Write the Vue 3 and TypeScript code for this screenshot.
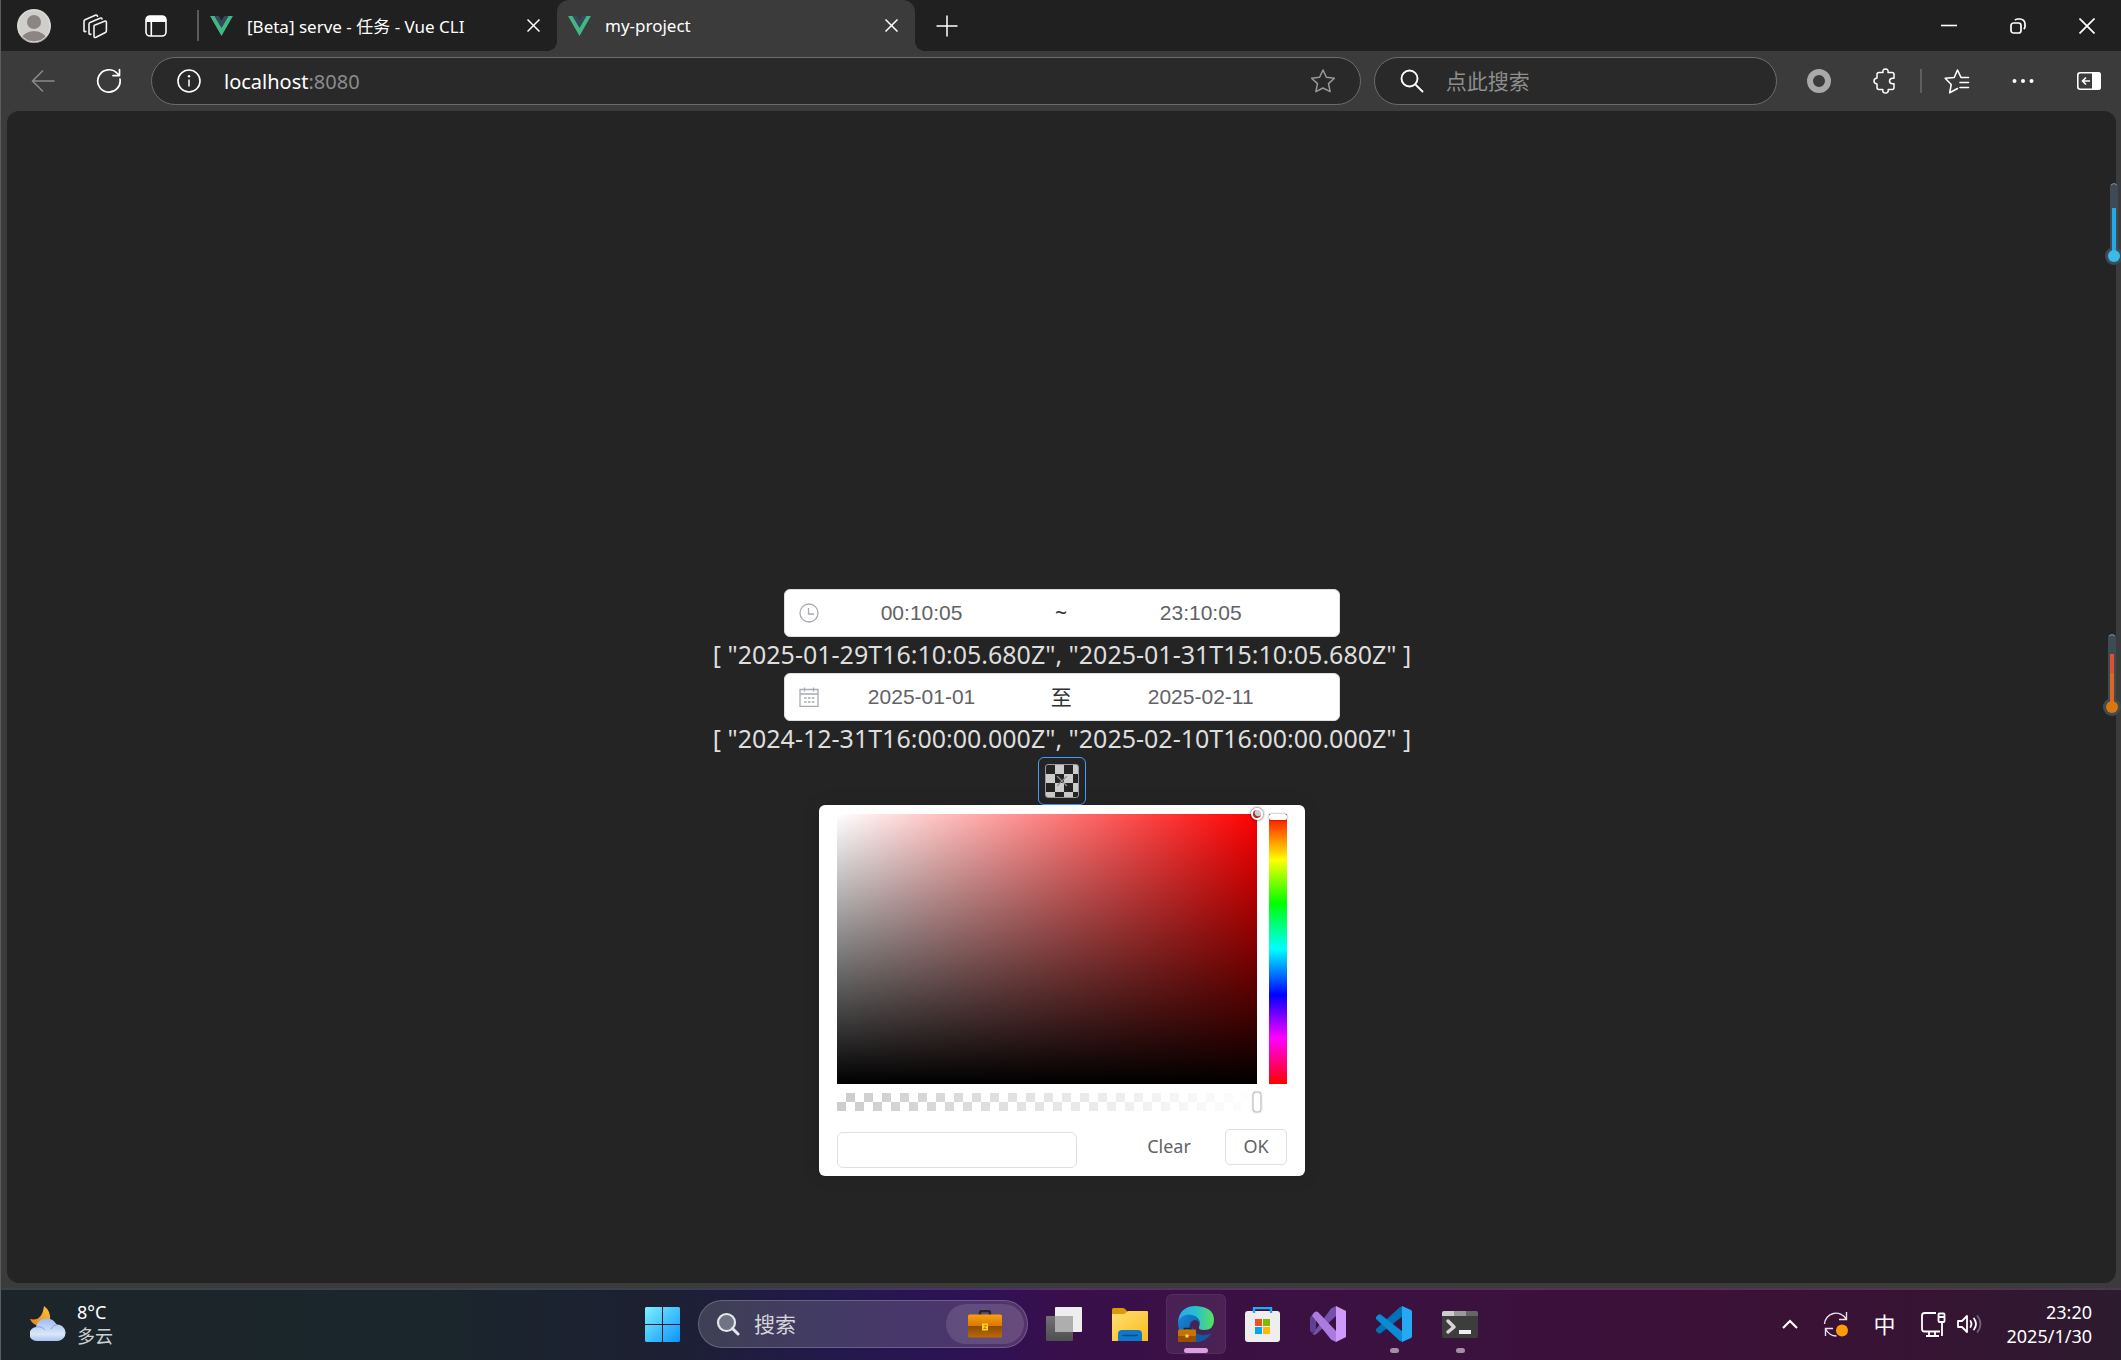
<script setup lang="ts">
import { ref, computed } from 'vue'

const timeStart = ref('00:10:05')
const timeEnd = ref('23:10:05')
const dateStart = ref('2025-01-01')
const dateEnd = ref('2025-02-11')
const timeRange = ref<string[]>(['2025-01-29T16:10:05.680Z', '2025-01-31T15:10:05.680Z'])
const dateRange = ref<string[]>(['2024-12-31T16:00:00.000Z', '2025-02-10T16:00:00.000Z'])

const show = (range: string[]): string => '[ ' + range.map((v) => `"${v}"`).join(', ') + ' ]'
const timeText = computed(() => show(timeRange.value))
const dateText = computed(() => show(dateRange.value))

const hue = ref(0)
const alpha = ref(100)
const colorText = ref('')
const webQuery = ref('')
</script>

<template>
  <div class="desktop">
    <header class="titlebar">
      <div class="title-tools">
        <button class="tool" aria-label="Profile">
          <svg width="34" height="34" viewBox="0 0 34 34">
            <defs><clipPath id="av"><circle cx="17" cy="17" r="17" /></clipPath></defs>
            <g clip-path="url(#av)">
              <rect width="34" height="34" fill="#d0cecb" />
              <circle cx="17" cy="13" r="7" fill="#8b8683" />
              <ellipse cx="17" cy="32" rx="13" ry="10" fill="#8b8683" />
            </g>
            <circle cx="17" cy="17" r="16" fill="none" stroke="#dedcd9" />
          </svg>
        </button>
        <button class="tool" aria-label="Workspaces">
          <svg width="26" height="26" viewBox="0 0 26 26" fill="none" stroke="#f2f2f2" stroke-width="1.6" stroke-linejoin="round" stroke-linecap="round">
            <path d="M12.5 12.2 22.5 8.2Q24.4 7.6 24.4 9.5V17.8Q24.4 19 23.4 19.5L14 24.3Q12 25 12 23V13.4Q12 12.5 12.5 12.2Z" />
            <path d="M20 6Q19.600 4.600 18 5.200L8 9.600Q7 10 7 11.200V20.500Q7.200 21.800 8.800 21.200" />
            <path d="M15.500 3.200Q15 1.600 13.300 2.200L3 6.700Q2 7.200 2 8.400V17.800Q2.200 19 3.800 18.400" />
          </svg>
        </button>
        <button class="tool" aria-label="Tab actions">
          <svg width="22" height="22" viewBox="0 0 22 22">
            <rect x="1" y="1" width="20" height="20" rx="4" fill="none" stroke="#fff" stroke-width="1.600" />
            <path d="M1 7V5a4 4 0 0 1 4-4h12a4 4 0 0 1 4 4v2zM5.500 7h1.600v14H5.500z" fill="#fff" />
          </svg>
        </button>
      </div>
      <nav class="tabs">
        <div class="tab">
          <svg class="vue" viewBox="0 0 24 21"><path d="M0 0h4.800L12 12.400 19.200 0H24L12 21z" fill="#41b883" /><path d="M4.800 0h4.400L12 4.900 14.800 0h4.400L12 12.400z" fill="#34495e" /></svg>
          <span class="tab-title">[Beta] serve - 任务 - Vue CLI</span>
          <button class="tab-close" aria-label="Close tab"><svg width="13" height="13" viewBox="0 0 13 13"><path d="M.5.5l12 12M12.500.5l-12 12" stroke="#fff" stroke-width="1.500" /></svg></button>
        </div>
        <div class="tab active">
          <svg class="vue" viewBox="0 0 24 21"><path d="M0 0h4.800L12 12.400 19.200 0H24L12 21z" fill="#41b883" /><path d="M4.800 0h4.400L12 4.900 14.800 0h4.400L12 12.400z" fill="#34495e" /></svg>
          <span class="tab-title">my-project</span>
          <button class="tab-close" aria-label="Close tab"><svg width="13" height="13" viewBox="0 0 13 13"><path d="M.5.5l12 12M12.500.5l-12 12" stroke="#fff" stroke-width="1.500" /></svg></button>
        </div>
        <button class="new-tab" aria-label="New tab"><svg width="22" height="22" viewBox="0 0 22 22"><path d="M11 .5v21M.5 11h21" stroke="#fff" stroke-width="1.500" /></svg></button>
      </nav>
      <div class="window-controls">
        <button aria-label="Minimize"><svg width="16" height="16" viewBox="0 0 16 16"><path d="M0 7.500h16" stroke="#fff" stroke-width="1.600" /></svg></button>
        <button aria-label="Restore"><svg width="16" height="16" viewBox="0 0 16 16" fill="none" stroke="#fff" stroke-width="1.700"><rect x="1" y="5" width="10" height="10" rx="2.500" /><path d="M5 2.300Q5.800 1 7.500 1H10a5 5 0 0 1 5 5v2.500q0 1.700-1.300 2.500" /></svg></button>
        <button aria-label="Close"><svg width="16" height="16" viewBox="0 0 16 16"><path d="M.5.5l15 15M15.500.5l-15 15" stroke="#fff" stroke-width="1.700" /></svg></button>
      </div>
    </header>

    <div class="toolbar">
      <button class="nav-btn" aria-label="Back"><svg width="24" height="22" viewBox="0 0 24 22" fill="none" stroke="#8a8a8a" stroke-width="1.600" stroke-linecap="round" stroke-linejoin="round"><path d="M23 11H1.500M11.500 1 1.500 11l10 10" /></svg></button>
      <button class="nav-btn" aria-label="Refresh"><svg width="26" height="26" viewBox="0 0 26 26" fill="none" stroke="#fff" stroke-width="1.700" stroke-linecap="round" stroke-linejoin="round"><path d="M24 11.200A11.200 11.200 0 1 1 21.300 5.500L23.500 7.600M23.500 1.500V7.600H17" /></svg></button>
      <div class="fields">
        <div class="pill">
          <svg width="24" height="24" viewBox="0 0 24 24"><circle cx="12" cy="12" r="11" fill="none" stroke="#fff" stroke-width="1.600" /><path d="M12 10.500v7" stroke="#fff" stroke-width="1.500" /><circle cx="12" cy="7.300" r="1.200" fill="#fff" /></svg>
          <a class="url" href="#">localhost<span>:8080</span></a>
          <button aria-label="Favorite"><svg width="24" height="26" viewBox="1 0 24 26"><path d="M13 2l3.400 7.300 8 .9-5.900 5.400 1.600 8L13 20l-7.100 3.600 1.600-8L1.600 10.200l8-.9z" fill="none" stroke="#999" stroke-width="1.500" stroke-linejoin="round" /></svg></button>
        </div>
        <div class="pill web-search">
          <svg width="24" height="24" viewBox="0 0 24 24" fill="none" stroke="#fff" stroke-width="1.900"><circle cx="9.500" cy="9.500" r="8" /><path d="M15.300 15.300 22.500 22.500" stroke-linecap="round" /></svg>
          <input v-model="webQuery" type="text" placeholder="点此搜索" aria-label="点此搜索" />
        </div>
      </div>
      <div class="actions">
        <button class="w24" aria-label="Extension"><svg width="24" height="24" viewBox="0 0 24 24"><circle cx="12" cy="12" r="9" fill="none" stroke="#a9a9a9" stroke-width="6" /></svg></button>
        <button class="w24" aria-label="Extensions"><svg width="24" height="26" viewBox="0 0 24 26" fill="none" stroke="#fff" stroke-width="1.500" stroke-linejoin="round"><path d="M6 4.500H10C9.400 2.200 10.600 1 12.500 1S15.600 2.200 15 4.500H19Q21 4.500 21 6.500V10.200H19.500Q16.500 10.500 16.500 13T19.500 15.800H21V19.500Q21 21.500 19 21.500H15.200C15.600 24 14.400 25 12.500 25S9.400 24 9.800 21.500H6Q4 21.500 4 19.500V16Q1 15.600 1 13T4 10V6.500Q4 4.500 6 4.500Z" /></svg></button>
        <i class="sep"></i>
        <button class="w24" aria-label="Favorites"><svg width="26" height="26" viewBox="0 0 26 26" fill="none" stroke="#fff" stroke-width="1.600" stroke-linejoin="round" stroke-linecap="round"><path d="M24.500 9.500H17L13.500 2l-3.300 7.500-9 .8 6 6.200-1.500 8.300L13.500 20.500M16 14.500h8.500M16 19.500h8.500" /></svg></button>
        <button class="w24" aria-label="More"><svg width="22" height="6" viewBox="0 0 22 6" fill="#fff"><circle cx="2.500" cy="3" r="2" /><circle cx="11" cy="3" r="2" /><circle cx="19.500" cy="3" r="2" /></svg></button>
        <button class="w24" aria-label="Sidebar"><svg width="24" height="18" viewBox="0 0 24 18"><rect x=".8" y=".8" width="22.400" height="16.400" rx="2.500" fill="none" stroke="#fff" stroke-width="1.600" /><path d="M15 0h6a3 3 0 0 1 3 3v12a3 3 0 0 1-3 3h-6z" fill="#fff" /><path d="M13 9H5.500M9 5.500 5.500 9 9 12.500" fill="none" stroke="#fff" stroke-width="1.600" /></svg></button>
      </div>
    </div>

    <main class="viewport">
      <div class="page">
        <div class="range">
          <svg class="range-icon" viewBox="0 0 20 20" fill="none" stroke="#a8abb2" stroke-width="1.300"><circle cx="10" cy="10" r="9" /><path d="M9.500 5v6H15" /></svg>
          <input v-model="timeStart" type="text" aria-label="Start time" />
          <span class="range-sep">~</span>
          <input v-model="timeEnd" type="text" aria-label="End time" />
        </div>
        <div class="value">{{ timeText }}</div>
        <div class="range">
          <svg class="range-icon" viewBox="0 0 20 20" fill="none" stroke="#a8abb2" stroke-width="1.300"><path d="M1 2.500h18v16.800H1zM1 7h18M5.500 .5v4M14.500 .5v4" /><path d="M5 11h2.600M8.900 11h2.600M12.800 11h2.600M5 15h2.600M8.900 15h2.600M12.800 15h2.600" /></svg>
          <input v-model="dateStart" type="text" aria-label="Start date" />
          <span class="range-sep">至</span>
          <input v-model="dateEnd" type="text" aria-label="End date" />
        </div>
        <div class="value">{{ dateText }}</div>
        <div class="picker">
          <button class="trigger" aria-label="Pick a color">
            <span class="swatch checker"><svg width="12" height="12" viewBox="0 0 12 12"><path d="M1 1l10 10M11 1 1 11" stroke="#909399" stroke-width="1.200" /></svg></span>
          </button>
          <div class="panel">
            <div class="panel-main">
              <div class="sv"><i class="cursor"></i></div>
              <input v-model="hue" class="hue" type="range" min="0" max="360" aria-label="Hue" />
            </div>
            <div class="alpha checker">
              <input v-model="alpha" type="range" min="0" max="100" aria-label="Alpha" />
            </div>
            <div class="panel-foot">
              <input v-model="colorText" class="hex" type="text" aria-label="Color value" />
              <div class="panel-btns">
                <button class="clear">Clear</button>
                <button class="ok">OK</button>
              </div>
            </div>
          </div>
        </div>
      </div>
      <svg class="gauge first" width="18" height="84" viewBox="0 0 18 84">
        <rect x="5" y="1" width="8" height="72" rx="4" fill="#3e4b55" /><circle cx="9" cy="74" r="9" fill="#3e4b55" />
        <path d="M6 3q3-3 6 0" fill="none" stroke="#7e878d" /><path d="M9 26v44" stroke="#23a9e8" stroke-width="4" /><circle cx="9" cy="74" r="6" fill="#3bb9e9" />
      </svg>
      <svg class="gauge second" width="18" height="84" viewBox="0 0 18 84">
        <rect x="5" y="1" width="8" height="72" rx="4" fill="#3e4b55" /><circle cx="9" cy="74" r="9" fill="#3e4b55" />
        <path d="M6 3q3-3 6 0" fill="none" stroke="#7e878d" /><path d="M7 21h4v20H7z" fill="#dc5030" /><path d="M7 40h4v30H7z" fill="#dc6820" /><circle cx="9" cy="74" r="6" fill="#da750f" />
      </svg>
    </main>

    <footer class="taskbar">
      <button class="weather">
        <svg width="36" height="36" viewBox="0 0 36 36">
          <defs>
            <linearGradient id="cl" x2="0" y2="1"><stop stop-color="#9dbcf0" /><stop offset=".7" stop-color="#dbe6fa" /><stop offset="1" stop-color="#a9c3f2" /></linearGradient>
            <linearGradient id="mo" x1="1" x2="0" y2="1"><stop stop-color="#f8c63c" /><stop offset="1" stop-color="#ee7d18" /></linearGradient>
          </defs>
          <path d="M14 0q7 5 6 14l-9 6Q3 20 0 13q12 3 14-13z" fill="url(#mo)" />
          <path d="M7 35a7 7 0 0 1-1-14 11 11 0 0 1 20.500-2.500A8 8 0 1 1 28 35z" fill="url(#cl)" />
          <path d="M6 21q6-1 9 3M21 23q2-4 6-4.500" fill="none" stroke="#7fa3e6" stroke-width="1" />
        </svg>
        <span class="weather-text"><span>8°C</span><span class="dim">多云</span></span>
      </button>

      <div class="apps">
        <button class="app" aria-label="Start">
          <svg width="35" height="35" viewBox="0 0 35 35"><defs><linearGradient id="win" x2="1" y2="1"><stop stop-color="#7df0ff" /><stop offset="1" stop-color="#0a94fb" /></linearGradient></defs><path d="M1 0h16v17H0V1zM18 0h16l1 1v16H18zM0 18h17v17H1l-1-1zM18 18h17v16l-1 1H18z" fill="url(#win)" /></svg>
        </button>
        <div class="task-search">
          <svg width="24" height="24" viewBox="0 0 24 24" fill="none" stroke="#e4e6ea" stroke-width="2.200"><circle cx="10.500" cy="10.500" r="8.500" fill="#6f7384" /><path d="M16.500 16.500 22 22" stroke-width="3" stroke-linecap="round" /></svg>
          <input type="text" placeholder="搜索" aria-label="搜索" />
          <span class="daily">
            <svg width="34" height="28" viewBox="0 0 34 28"><defs><linearGradient id="bc" x2="0" y2="1"><stop stop-color="#f9a010" /><stop offset=".5" stop-color="#d97800" /><stop offset=".52" stop-color="#8f4a04" /><stop offset="1" stop-color="#bd6a04" /></linearGradient></defs><path d="M12 5V3q0-2 2-2h6q2 0 2 2v2" fill="none" stroke="#29252c" stroke-width="2.400" /><rect y="4.500" width="34" height="23" rx="1.500" fill="url(#bc)" /><rect x="14" y="13.500" width="6" height="7" fill="#fdd61d" /><path d="M15.500 15.500h3l-3 3h3" fill="none" stroke="#c98704" /></svg>
          </span>
        </div>
        <button class="app" aria-label="Task view">
          <svg width="36" height="34" viewBox="0 0 36 34"><defs><linearGradient id="tv" x2="0" y2="1"><stop stop-color="#727272" /><stop offset="1" stop-color="#4e4e4e" /></linearGradient></defs><rect y="9" width="27" height="25" rx="1" fill="url(#tv)" /><rect x="9" width="27" height="25" rx="1" fill="#eee" /><rect x="9" y="9" width="18" height="16" fill="#aeaeae" /></svg>
        </button>
        <button class="app" aria-label="File Explorer">
          <svg width="36" height="33" viewBox="0 0 36 33"><defs><linearGradient id="fo" x2="1" y2="1"><stop stop-color="#ffdf70" /><stop offset="1" stop-color="#fabb20" /></linearGradient></defs><path d="M0 1.500Q0 0 1.500 0H11q1 0 2 1l2.500 2.500L12 9H0z" fill="#db9a05" /><path d="M0 6h11q2 0 3-1.500L16 3h19q1 0 1 1v29H0z" fill="url(#fo)" /><path d="M6 33v-7q0-4 4-4h16q4 0 4 4v7z" fill="#1177c9" /><path d="M11 27.500h14" stroke="#0a4b8c" stroke-width="1.600" stroke-linecap="round" /></svg>
        </button>
        <button class="app current" aria-label="Edge">
          <svg width="36" height="36" viewBox="0 0 36 36">
            <defs>
              <linearGradient id="e1" x2="1"><stop stop-color="#2aa7ee" /><stop offset=".5" stop-color="#28c0cf" /><stop offset="1" stop-color="#5ce05a" /></linearGradient>
              <linearGradient id="e2" x2="1" y2="1"><stop stop-color="#168bd8" /><stop offset="1" stop-color="#0c4f96" /></linearGradient>
            </defs>
            <path d="M0 17Q1 0 18 0 36 1 36 14 36 24 26 24 20 24 21 21 23 17 19 13 12 7 0 17z" fill="url(#e1)" />
            <path d="M0 15Q6 7 14 9 22 11 22 18 18 11 13 16 9 24 16 31 19 35 23 35 17 37 11 35 0 30 0 15z" fill="url(#e2)" />
            <path d="M14 20Q16 29 25 29 30 29 33.500 27 28 36 18 36 11 30 14 20z" fill="#0d59a3" />
            <path d="M6.500 24v-1.500h6V24" fill="none" stroke="#222" stroke-width="1.500" /><rect y="23.500" width="18" height="12.500" rx="1" fill="#c77205" /><rect y="30" width="18" height="6" fill="#985006" /><rect x="7.500" y="28.500" width="3" height="3" fill="#ffd93a" />
          </svg>
          <i class="mark wide"></i>
        </button>
        <button class="app" aria-label="Microsoft Store">
          <svg width="35" height="35" viewBox="0 0 35 35"><rect y="4" width="35" height="31" rx="3" fill="#eee" /><path d="M9 6V1h17v5" fill="none" stroke="#23aaf2" stroke-width="2.400" /><path d="M10 12h7v7h-7z" fill="#f25022" /><path d="M18 12h7v7h-7z" fill="#7fba00" /><path d="M10 20h7v7h-7z" fill="#00a4ef" /><path d="M18 20h7v7h-7z" fill="#ffb900" /></svg>
        </button>
        <button class="app" aria-label="Visual Studio">
          <svg width="36" height="36" viewBox="0 0 36 36"><path d="M0 11.500 2 9l4 3v12l-4 3-2-2.500z" fill="#5e4290" /><path d="M3 27.500 21 2.500 26 0v10L7 27.500q-3 3-5-.5z" fill="#7350ac" /><path d="M2 9.500Q5 4 8 6L26 25v11L21 33.500 3 11z" fill="#aa7ce0" /><path d="M26 0l10 5v26l-10 5z" fill="#cf9bfb" /></svg>
        </button>
        <button class="app" aria-label="Visual Studio Code">
          <svg width="36" height="36" viewBox="0 0 36 36"><path d="M0 23 24 1l3-1v10L5 27q-1.500 1-3 0l-2-2q-1-1 0-2z" fill="#0070b8" /><path d="M0 11 2 9q1.500-1.300 3-.200L27 26v10l-3-1L0 13q-1-1 0-2z" fill="#0a8bd5" /><path d="M26 0l9 4q1 .5 1 2v24q0 1.500-1 2l-9 4z" fill="#25a9f3" /></svg>
          <i class="mark"></i>
        </button>
        <button class="app" aria-label="Terminal">
          <svg width="36" height="27" viewBox="0 0 36 27"><rect width="36" height="27" rx="2" fill="#3d3d3d" /><path d="M0 5V2q0-2 2-2h10v5z" fill="#ccc" /><path d="M12 0h12v5H12z" fill="#999" /><path d="M24 0h10q2 0 2 2v3H24z" fill="#666" /><path d="M6 10l6 6-6 5" fill="none" stroke="#d6d6d6" stroke-width="3.500" stroke-linecap="round" stroke-linejoin="round" /><rect x="17" y="19" width="12" height="4" fill="#eee" /></svg>
          <i class="mark"></i>
        </button>
      </div>

      <div class="tray">
        <button aria-label="Hidden icons"><svg width="16" height="10" viewBox="0 0 16 10"><path d="M1 9l7-7 7 7" fill="none" stroke="#fff" stroke-width="2.200" /></svg></button>
        <button aria-label="Update"><svg width="26" height="26" viewBox="0 0 26 26" fill="none" stroke="#e8e2e8" stroke-width="1.400"><path d="M1.500 13A11.500 11.500 0 0 1 23 8M23.500 1v7.500H16M2.500 25v-7.500H10M2.500 18q4 7 11 7" /><circle cx="19" cy="19.500" r="6" fill="#ff9a0b" stroke="none" /></svg></button>
        <button class="ime">中</button>
        <button class="net" aria-label="Network and volume">
          <svg width="25" height="25" viewBox="0 0 25 25" fill="none" stroke="#fff" stroke-width="1.800"><path d="M15 1H3.500Q1 1 1 3.500V17q0 2.500 2.500 2.500H19M8 20v4M14 20v4M5 24h13M17.500 2.500q0-1 1-1h4q1 0 1 1V9q0 1-1 1h-4q-1 0-1-1zM17.500 5h6M21 10v14" /></svg>
          <svg width="25" height="20" viewBox="0 0 25 20" fill="none" stroke="#fff" stroke-width="1.800" stroke-linejoin="round" stroke-linecap="round"><path d="M1 7v6h4l5 5V2L5 7zM13.500 7q2 3 0 6M17 4.500q4 5.500 0 11" /><path d="M20.500 2q6 8 0 16" stroke="#75637a" /></svg>
        </button>
        <button class="clock"><span>23:20</span><span>2025/1/30</span></button>
      </div>
    </footer>
  </div>
</template>

<style>
body {
  background: #3b3b3b;
}
</style>

<style scoped>
.desktop,
.desktop * {
  box-sizing: border-box;
}
.desktop {
  min-height: 100vh;
  display: flex;
  flex-direction: column;
  background: #3b3b3b;
  border-left: 1px solid #5c5c5c;
  font-family: "Noto Sans", "Noto Sans CJK SC", sans-serif;
  font-size: 17px;
  color: #fff;
}
button {
  display: flex;
  align-items: center;
  justify-content: center;
  padding: 0;
  border: 0;
  background: none;
  color: inherit;
  font: inherit;
}
input {
  min-width: 0;
  padding: 0;
  margin: 0;
  border: 0;
  outline: 0;
  background: none;
  font: inherit;
}
svg {
  display: block;
  flex: none;
}

/* title bar */
.titlebar {
  display: flex;
  height: 51px;
  background: #202020;
}
.title-tools {
  display: flex;
  align-items: center;
  gap: 3px;
  width: 198px;
  padding-left: 4px;
  border-right: 2px solid #5a5a5a;
  border-image: linear-gradient(transparent 20%, #5a5a5a 20% 80%, transparent 80%) 1;
}
.tool {
  width: 58px;
}
.tabs {
  flex: 1;
  display: flex;
}
.tab {
  position: relative;
  display: flex;
  align-items: center;
  width: 358px;
  padding: 0 11px;
}
.tab.active {
  background: #3b3b3b;
  border-radius: 12px 12px 0 0;
}
.tab.active::before,
.tab.active::after {
  content: "";
  position: absolute;
  bottom: 0;
  width: 10px;
  height: 10px;
}
.tab.active::before {
  left: -10px;
  background: radial-gradient(circle at 0 0, #202020 10px, #3b3b3b 10px);
}
.tab.active::after {
  right: -10px;
  background: radial-gradient(circle at 100% 0, #202020 10px, #3b3b3b 10px);
}
.vue {
  width: 23px;
  height: 20px;
}
.tab-title {
  flex: 1;
  padding-left: 14px;
  white-space: nowrap;
}
.tab-close {
  width: 25px;
  height: 25px;
}
.new-tab {
  width: 64px;
}
.window-controls {
  display: flex;
}
.window-controls button {
  width: 69px;
}

/* toolbar */
.toolbar {
  display: flex;
  align-items: center;
  height: 60px;
  padding: 0 20px 0 18px;
}
.nav-btn {
  width: 48px;
  margin-right: 18px;
}
.fields {
  flex: 1;
  display: grid;
  grid-template-columns: 3fr 1fr;
  gap: 13px;
}
.pill {
  display: flex;
  align-items: center;
  min-width: 0;
  height: 48px;
  padding: 0 25px;
  border: 1px solid #6b6b6b;
  border-radius: 24px;
  background: #292929;
}
.url {
  flex: 1;
  padding-left: 23px;
  font-size: 20px;
  color: #fff;
  text-decoration: none;
}
.url span {
  color: #8c8c8c;
}
.web-search input {
  flex: 1;
  padding-left: 22px;
  font-size: 21px;
  color: #fff;
}
.web-search input::placeholder {
  color: #8e8e8e;
}
.actions {
  display: flex;
  align-items: center;
  gap: 42px;
  padding-left: 30px;
}
.w24 {
  width: 24px;
}
.sep {
  width: 2px;
  height: 24px;
  margin: 0 -19px;
  background: #5e5e5e;
}

/* page */
.viewport {
  position: relative;
  flex: 1;
  display: flex;
  align-items: center;
  justify-content: center;
  margin: 0 5px 5px 6px;
  padding-left: 1px;
  border-radius: 12px;
  background: #242424;
}
.page {
  display: flex;
  flex-direction: column;
  align-items: center;
  width: 700px;
}
.range {
  display: flex;
  align-items: center;
  width: 556px;
  height: 48px;
  padding: 0 14px;
  border: 1px solid #dcdfe6;
  border-radius: 6px;
  background: #fff;
}
.range-icon {
  width: 20px;
  height: 20px;
}
.range input {
  width: 39%;
  text-align: center;
  font-family: "Liberation Sans", sans-serif;
  font-size: 21px;
  color: #606266;
}
.range-sep {
  width: 74px;
  padding-bottom: 2px;
  text-align: center;
  font-size: 21px;
  color: #303133;
}
.value {
  padding-bottom: 2px;
  line-height: 34px;
  font-size: 25px;
  white-space: nowrap;
  color: #dedede;
}
.picker {
  position: relative;
}
.trigger {
  width: 48px;
  height: 48px;
  border: 1px solid #409eff;
  border-radius: 6px;
}
.checker {
  background: conic-gradient(#ccc 25%, transparent 0 50%, #ccc 0 75%, transparent 0) 0 0 / 18px 18px;
}
.swatch {
  display: flex;
  align-items: center;
  justify-content: center;
  width: 34px;
  height: 34px;
  border: 1px solid #999;
  border-radius: 3px;
}
.panel {
  position: absolute;
  top: 100%;
  left: 50%;
  transform: translateX(-50%);
  width: 486px;
  padding: 9px 18px 8px;
  border-radius: 6px;
  background: #fff;
  box-shadow: 0 0 18px rgba(0, 0, 0, 0.12);
}
.panel-main {
  display: flex;
  justify-content: space-between;
}
.sv {
  position: relative;
  width: 420px;
  height: 270px;
  background: linear-gradient(to top, #000, transparent), linear-gradient(to right, #fff, #f00);
}
.cursor {
  position: absolute;
  top: -6px;
  right: -6px;
  width: 12px;
  height: 12px;
  border: 2px solid #fff;
  border-radius: 50%;
  background: radial-gradient(circle at 65% 35%, #ccc 3px, #b22 4px);
  box-shadow: 0 0 2px 1px rgba(0, 0, 0, 0.4);
}
.hue {
  appearance: none;
  writing-mode: vertical-lr;
  width: 18px;
  height: 270px;
  background: linear-gradient(#f00, #ff0 17%, #0f0 33%, #0ff 50%, #00f 67%, #f0f 83%, #f00);
}
.hue::-webkit-slider-thumb {
  appearance: none;
  width: 18px;
  height: 6px;
  border-radius: 2px;
  background: #fff;
  box-shadow: 0 0 2px rgba(0, 0, 0, 0.6);
}
.alpha {
  width: 420px;
  height: 18px;
  margin-top: 9px;
}
.alpha input {
  display: block;
  appearance: none;
  width: 428px;
  height: 18px;
  margin: 0 -4px;
  background: linear-gradient(to right, transparent, #fff);
}
.alpha input::-webkit-slider-thumb {
  appearance: none;
  box-sizing: border-box;
  width: 8px;
  height: 20px;
  border: 1px solid #d6d6d6;
  border-radius: 3px;
  background: #fff;
  box-shadow: 0 0 2px rgba(0, 0, 0, 0.6);
}
.panel-foot {
  display: flex;
  align-items: flex-end;
  justify-content: space-between;
  margin-top: 18px;
}
.hex {
  width: 240px;
  height: 36px;
  border: 1px solid #dcdfe6;
  border-radius: 6px;
  color: #606266;
}
.panel-btns {
  display: flex;
  gap: 18px;
  margin-bottom: 3px;
  font-size: 18px;
  color: #606266;
}
.panel-btns button {
  height: 36px;
  padding-bottom: 2px;
}
.clear {
  width: 76px;
}
.panel-btns .ok {
  width: 62px;
  border: 1px solid #dcdfe6;
  border-radius: 5px;
}
.gauge {
  position: absolute;
}
.gauge.first {
  top: 71px;
  right: -7px;
}
.gauge.second {
  top: 522px;
  right: -5px;
}

/* taskbar */
.taskbar {
  display: grid;
  grid-template-columns: 1fr auto 1fr;
  align-items: center;
  height: 72px;
  padding-bottom: 2px;
  border-top: 2px solid rgba(255, 255, 255, 0.14);
  background: linear-gradient(to right, #1b252a, #1b262c 20%, #1c2032 31%, #22194a 39%, #2e1155 46%, #390f4b 50%, #3b1143 60%, #3b1138 80%, #371333 90%, #2c1b2e);
}
.weather {
  justify-self: start;
  gap: 11px;
  padding-left: 29px;
}
.weather-text {
  display: flex;
  flex-direction: column;
  text-align: left;
  font-size: 18px;
  line-height: 24px;
}
.dim {
  color: #ccd0d2;
}
.apps {
  display: flex;
  align-items: center;
  gap: 6px;
}
.app {
  position: relative;
  width: 60px;
  height: 60px;
  border-radius: 6px;
}
.app.current {
  background: rgba(255, 255, 255, 0.08);
  box-shadow: inset 0 0 0 1px rgba(255, 255, 255, 0.06);
}
.mark {
  position: absolute;
  bottom: 1px;
  left: 50%;
  width: 9px;
  height: 5px;
  margin-left: -4px;
  border-radius: 3px;
  background: #a68da9;
}
.mark.wide {
  width: 24px;
  margin-left: -12px;
  background: #dd9fe3;
}
.task-search {
  display: flex;
  align-items: center;
  width: 330px;
  height: 48px;
  padding: 0 3px 0 17px;
  border: 1px solid rgba(255, 255, 255, 0.2);
  border-radius: 24px;
  background: rgba(255, 255, 255, 0.15);
}
.task-search input {
  flex: 1;
  padding-left: 14px;
  font-size: 21px;
  color: #fff;
}
.task-search input::placeholder {
  color: #d5d5da;
}
.daily {
  display: flex;
  align-items: center;
  justify-content: center;
  width: 78px;
  height: 40px;
  border-radius: 20px;
  background: rgba(255, 255, 255, 0.12);
}
.tray {
  justify-self: end;
  display: flex;
  align-items: center;
  padding-right: 29px;
}
.tray button {
  height: 48px;
  margin-right: 25px;
}
.tray .ime {
  width: 22px;
  padding-bottom: 2px;
  font-size: 22px;
}
.tray .net {
  gap: 11px;
}
.tray .clock {
  flex-direction: column;
  align-items: flex-end;
  margin-right: 0;
  font-size: 18px;
  line-height: 24px;
}
</style>
